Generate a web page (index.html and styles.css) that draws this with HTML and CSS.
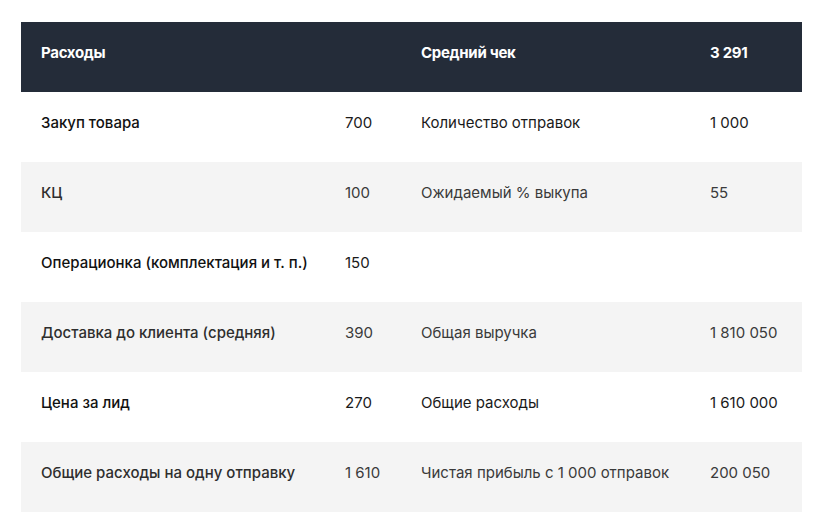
FILE: index.html
```html
<!DOCTYPE html>
<html lang="ru">
<head>
<meta charset="utf-8">
<link rel="stylesheet" href="styles.css">
</head>
<body>
<table class="calc">
  <colgroup>
    <col class="c1"><col class="c2"><col class="c3"><col class="c4">
  </colgroup>
  <thead>
    <tr class="head">
      <th>Расходы</th><th></th><th>Средний чек</th><th>3 291</th>
    </tr>
  </thead>
  <tbody>
    <tr class="light"><td class="name">Закуп товара</td><td>700</td><td>Количество отправок</td><td>1 000</td></tr>
    <tr class="grey"><td class="name">КЦ</td><td>100</td><td>Ожидаемый % выкупа</td><td>55</td></tr>
    <tr class="light"><td class="name">Операционка (комплектация и т. п.)</td><td>150</td><td></td><td></td></tr>
    <tr class="grey"><td class="name">Доставка до клиента (средняя)</td><td>390</td><td>Общая выручка</td><td>1 810 050</td></tr>
    <tr class="light"><td class="name">Цена за лид</td><td>270</td><td>Общие расходы</td><td>1 610 000</td></tr>
    <tr class="grey"><td class="name">Общие расходы на одну отправку</td><td>1 610</td><td>Чистая прибыль с 1 000 отправок</td><td>200 050</td></tr>
  </tbody>
</table>
</body>
</html>
```
FILE: styles.css
```css
html, body {
  margin: 0;
  background: #ffffff;
}
body {
  padding: 22px 13px 0 21px;
  font-family: Inter, "Noto Sans", sans-serif;
  font-size: 15px;
}
.calc {
  border-collapse: collapse;
  width: 781px;
  table-layout: fixed;
}
.c1 { width: 304px; }
.c2 { width: 76px; }
.c3 { width: 289px; }
.c4 { width: 112px; }
.calc th, .calc td {
  height: 70px;
  padding: 0 0 10px 20px;
  text-align: left;
  vertical-align: middle;
  white-space: nowrap;
  box-sizing: border-box;
}
.head {
  background: #242c39;
  color: #ffffff;
}
.head th {
  font-weight: 700;
  letter-spacing: -0.3px;
}
.light { background: #ffffff; color: #111111; }
.grey { background: #f4f4f4; color: #333333; }
.calc td { font-weight: 400; color: #3a3a3a; }
.light td { color: #1a1a1a; }
.calc td.name { font-weight: 500; color: #111111; }
.grey td.name { color: #2e2e2e; }
```
